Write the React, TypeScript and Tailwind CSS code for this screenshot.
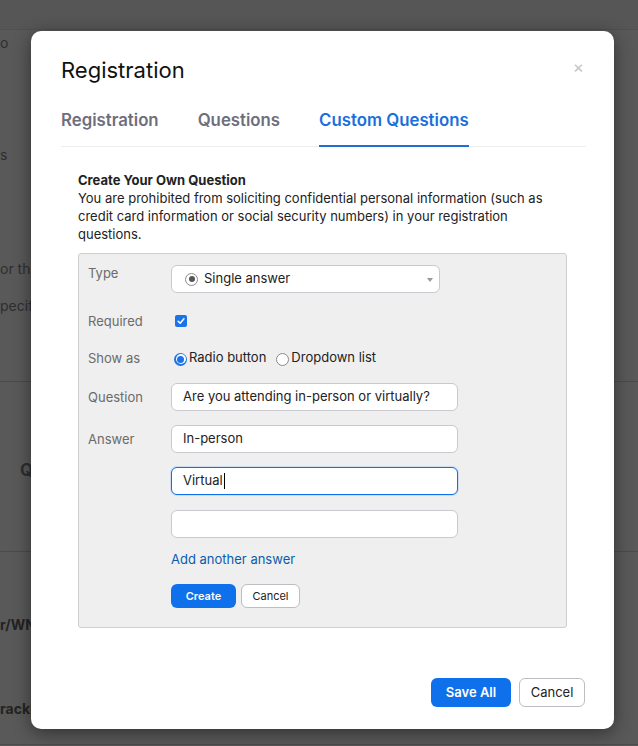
import React from 'react'

const body = { fontFamily: 'Inter, "Liberation Sans", Arial, sans-serif' }
const heading = { fontFamily: 'Inter, "Liberation Sans", sans-serif' }

function Background() {
  return (
    <div className="absolute inset-0 flex flex-col text-[14px] text-[#2e2e2e]" style={body}>
      <div className="h-[30px] shrink-0 border-b border-[#505050] bg-[#565656]" />
      <div className="pt-[4px] leading-[18px]">o</div>
      <div className="pt-[94px] leading-[18px]">s</div>
      <div className="pt-[96px] leading-[18px]">or this event</div>
      <div className="pt-[19px] leading-[18px]">pecific</div>
      <div className="mt-[66px] border-b border-[#4b4b4b]" />
      <div className="pl-[20px] pt-[77px] text-[17px] font-bold leading-[22px]">Q</div>
      <div className="mt-[70px] border-b border-[#4b4b4b]" />
      <div className="pt-[64px] font-bold leading-[18px] text-[#232323]">r/WNqa</div>
      <div className="pt-[66px] font-bold leading-[18px] text-[#232323]">racking</div>
      <div className="mt-[26px] border-b border-[#4b4b4b]" />
    </div>
  )
}

function Radio({ checked }: { checked: boolean }) {
  return checked ? (
    <span className="flex h-[13px] w-[13px] items-center justify-center rounded-full bg-[#1a73e8]">
      <span className="flex h-[10px] w-[10px] items-center justify-center rounded-full bg-white">
        <span className="h-[7px] w-[7px] rounded-full bg-[#1a73e8]" />
      </span>
    </span>
  ) : (
    <span className="block h-[13px] w-[13px] rounded-full border border-[#8a8a8a] bg-white" />
  )
}

function Row({ label, top, children, alignTop }: { label: string; top: string; children: React.ReactNode; alignTop?: boolean }) {
  return (
    <div className={`flex ${alignTop ? 'items-start' : 'items-center'} ${top}`}>
      <div className="w-[83px] shrink-0 text-[13px] leading-[16px] text-[#6b6b6b]">{label}</div>
      {children}
    </div>
  )
}

function Field({ value, focused, caret }: { value?: string; focused?: boolean; caret?: boolean }) {
  return (
    <div
      className={`flex h-[28px] w-[287px] items-center rounded-[6px] border bg-white px-[11px] text-[13px] text-[#222] ${
        focused ? 'border-[#0e71eb] shadow-[0_0_0_1px_rgba(14,113,235,0.15)]' : 'border-[#c9c9cf]'
      }`}
    >
      {value}
      {caret && <span className="ml-[1px] h-[16px] w-px bg-black" />}
    </div>
  )
}

export default function App() {
  return (
    <div className="relative h-[746px] w-full overflow-hidden bg-[#595959]">
      <Background />
      <div
        className="absolute left-[31px] top-[31px] flex h-[698px] w-[583px] flex-col rounded-[10px] bg-white shadow-[0_4px_18px_rgba(0,0,0,0.45)]"
        style={body}
      >
        <div className="flex items-start justify-between px-[30px] pt-[24px]">
          <h1 className="text-[22px] leading-[30px] text-[#111]" style={heading}>
            Registration
          </h1>
          <span className="pt-[3px] text-[17px] leading-[18px] text-[#c4c4c4]">×</span>
        </div>

        <div className="ml-[30px] mr-[28px] mt-[20px] flex gap-[39px] border-b border-[#ededed]" style={heading}>
          <div className="-mb-px h-[42px] pt-[3px] text-[16.8px] font-semibold leading-[24px] text-[#6e6e7e]">Registration</div>
          <div className="-mb-px h-[42px] pt-[3px] text-[16.8px] font-semibold leading-[24px] text-[#6e6e7e]">Questions</div>
          <div className="-mb-px h-[42px] border-b-2 border-[#1f6fd6] pt-[3px] text-[16.8px] font-semibold leading-[24px] text-[#1a6fdc]">
            Custom Questions
          </div>
        </div>

        <div className="px-[47px] pt-[24px]">
          <div className="text-[13px] font-bold leading-[18px] text-[#222]">Create Your Own Question</div>
          <p className="text-[13px] leading-[18px] text-[#222]">
            You are prohibited from soliciting confidential personal information (such as credit card information or
            social security numbers) in your registration questions.
          </p>

          <div className="mt-[10px] rounded-[3px] border border-[#cfcfcf] bg-[#efefef] pb-[19px] pl-[9px] pt-[11px]">
            <Row label="Type" top="" alignTop>
              <div className="flex h-[28px] w-[269px] items-center rounded-[6px] border border-[#c9c9cf] bg-white pl-[13px] pr-[6px] text-[13px] text-[#222]">
                <span className="mr-[6px] flex h-[13px] w-[13px] items-center justify-center rounded-full border border-[#8d8d8d]">
                  <span className="h-[6px] w-[6px] rounded-full bg-[#555]" />
                </span>
                Single answer
                <span className="ml-auto mt-[2px] h-0 w-0 border-x-[3px] border-t-[4px] border-x-transparent border-t-[#9a9a9a]" />
              </div>
            </Row>

            <Row label="Required" top="mt-[18px] h-[20px]">
              <span className="ml-[4px] flex h-[12px] w-[12px] items-center justify-center rounded-[2px] bg-[#1a73e8]">
                <svg viewBox="0 0 12 12" className="h-[10px] w-[10px]">
                  <path d="M2.5 6.3 L5 8.6 L9.5 3.4" fill="none" stroke="white" strokeWidth="1.8" strokeLinecap="round" strokeLinejoin="round" />
                </svg>
              </span>
            </Row>

            <Row label="Show as" top="mt-[17px] h-[20px]">
              <div className="flex items-center text-[13px] text-[#222]">
                <span className="ml-[3px] mt-[2px]">
                  <Radio checked />
                </span>
                <span className="ml-[2px]">Radio button</span>
                <span className="ml-[10px] mt-[2px]">
                  <Radio checked={false} />
                </span>
                <span className="ml-[2px]">Dropdown list</span>
              </div>
            </Row>

            <Row label="Question" top="mt-[15px]">
              <Field value="Are you attending in-person or virtually?" />
            </Row>

            <Row label="Answer" top="mt-[14px]">
              <Field value="In-person" />
            </Row>

            <div className="ml-[83px] mt-[14px]">
              <Field value="Virtual" focused caret />
            </div>
            <div className="ml-[83px] mt-[15px]">
              <Field />
            </div>

            <div className="ml-[83px] mt-[12px] text-[13px] leading-[18px] text-[#0b5cad]">Add another answer</div>

            <div className="ml-[83px] mt-[16px] flex gap-[5px]">
              <button className="h-[24px] w-[65px] rounded-[6px] bg-[#0e71eb] text-[11px] font-semibold text-white">Create</button>
              <button className="h-[24px] w-[59px] rounded-[6px] border border-[#bdbdc4] bg-white text-[11px] text-[#222]">
                Cancel
              </button>
            </div>
          </div>
        </div>

        <div className="mt-auto flex justify-end gap-[8px] pb-[22px] pr-[29px]">
          <button className="h-[29px] w-[80px] rounded-[6px] bg-[#0e71eb] text-[13px] font-semibold text-white">Save All</button>
          <button className="h-[29px] w-[66px] rounded-[6px] border border-[#bdbdc4] bg-white text-[13px] text-[#222]">Cancel</button>
        </div>
      </div>
    </div>
  )
}
